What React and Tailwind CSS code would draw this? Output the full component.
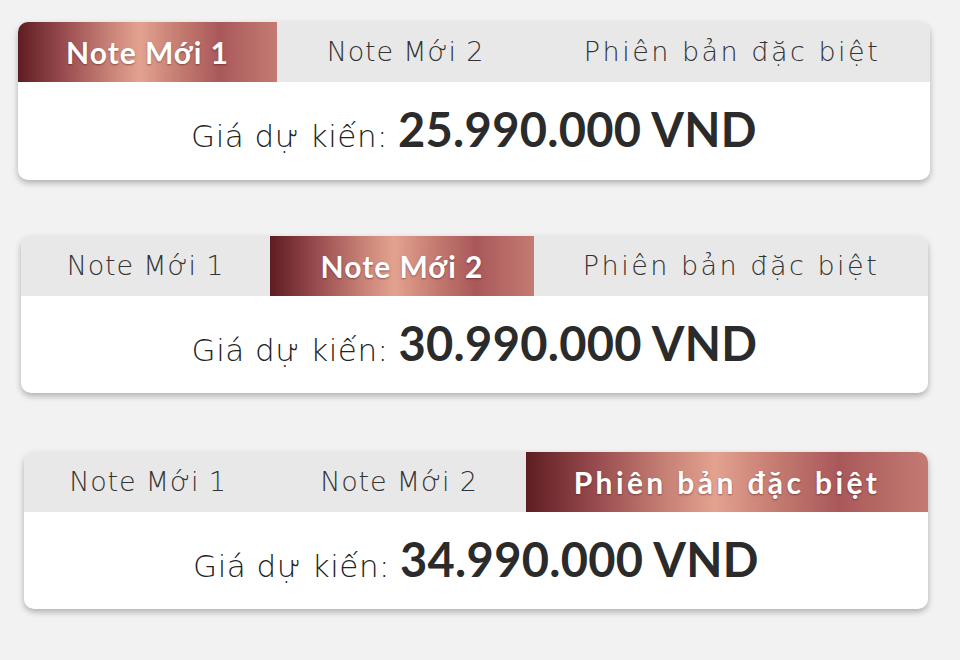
import React from 'react'

const cards = [
  { active: 0, price: '25.990.000', cls: 'ml-[18px] w-[912px] h-[158px]', cols: 'grid-cols-[259px_257px_1fr]' },
  { active: 1, price: '30.990.000', cls: 'ml-[21px] w-[907px] h-[157px] mt-[56px]', cols: 'grid-cols-[249px_264px_1fr]' },
  { active: 2, price: '34.990.000', cls: 'ml-[24px] w-[904px] h-[157px] mt-[59px]', cols: 'grid-cols-[248px_254px_1fr]' },
]

const tabs = [
  { label: 'Note Mới 1', on: 'tracking-[1px]', off: 'tracking-[0.8px]' },
  { label: 'Note Mới 2', on: 'tracking-[1px]', off: 'tracking-[0.8px]' },
  { label: 'Phiên bản đặc biệt', on: 'tracking-[3.4px]', off: 'tracking-[2.5px]' },
]

const App = () => {
  return (
    <div className="w-[960px] h-[660px] bg-[#f2f2f2] pt-[22px] font-['Lato',sans-serif] text-[#2b2b2b]">
      {cards.map((c, i) => (
        <div key={i} className={`${c.cls} flex flex-col bg-white rounded-[10px] overflow-hidden shadow-[0_3px_6px_rgba(0,0,0,0.28)]`}>
          <div className={`grid ${c.cols} h-[60px] bg-[#e8e8e8]`}>
            {tabs.map((t, j) =>
              j === c.active ? (
                <div
                  key={j}
                  className={`flex items-center justify-center bg-[linear-gradient(90deg,#5e1d22_0%,#9a4d50_18%,#c78175_35%,#e3a290_47%,#c57c71_62%,#a9585a_78%,#c47b72_100%)] text-white font-bold text-[30px] ${t.on} [text-shadow:0_1px_2px_rgba(60,10,10,0.45)]`}
                >
                  {t.label}
                </div>
              ) : (
                <div key={j} className={`flex items-center justify-center font-['DejaVu_Sans',sans-serif] text-[27px] font-extralight ${t.off} text-[#333]`}>
                  {t.label}
                </div>
              )
            )}
          </div>
          <div className="flex-1 flex items-baseline justify-center gap-[10px] pt-[12px]">
            <span className="font-['DejaVu_Sans',sans-serif] text-[31px] font-extralight tracking-[0.5px] text-[#222]">Giá dự kiến:</span>
            <span className="text-[47px] font-bold tracking-[0.3px] text-[#2b2b2b]">{c.price} VND</span>
          </div>
        </div>
      ))}
    </div>
  )
}

export default App
